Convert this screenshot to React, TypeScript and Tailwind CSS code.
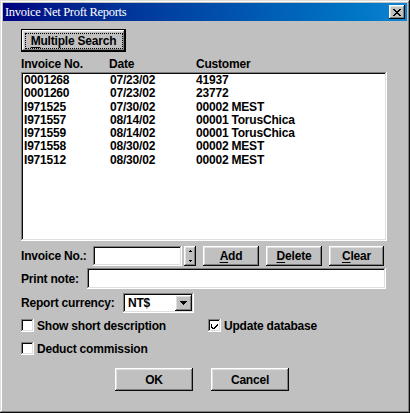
import React from 'react';

const raised =
    'bg-[#c0c0c0] shadow-[inset_-1px_-1px_#0a0a0a,inset_1px_1px_#ffffff,inset_-2px_-2px_#808080,inset_2px_2px_#dfdfdf]';
const sunken =
    'bg-white shadow-[inset_-1px_-1px_#ffffff,inset_1px_1px_#808080,inset_-2px_-2px_#dfdfdf,inset_2px_2px_#0a0a0a]';

const rows = [
    ['0001268', '07/23/02', '41937'],
    ['0001260', '07/23/02', '23772'],
    ['I971525', '07/30/02', '00002 MEST'],
    ['I971557', '08/14/02', '00001 TorusChica'],
    ['I971559', '08/14/02', '00001 TorusChica'],
    ['I971558', '08/30/02', '00002 MEST'],
    ['I971512', '08/30/02', '00002 MEST'],
];

function Btn({ w, children }: { w: string; children: React.ReactNode }) {
    return (
        <button className={`${raised} ${w} h-full flex items-center justify-center text-black`}>
            {children}
        </button>
    );
}

function Check({ checked, label }: { checked?: boolean; label: string }) {
    return (
        <label className="flex items-center gap-[3px] h-[13px]">
            <span className={`${sunken} w-[13px] h-[13px] flex items-center justify-center shrink-0`}>
                {checked && (
                    <svg width="7" height="7" viewBox="0 0 7 7">
                        <path d="M0 2h1v3h1v1h1v-1h1v-1h1v-1h1v-1h1v2h-1v1h-1v1h-1v1h-1v1h-1v-1h-1v-1h-1z" fill="#000" />
                    </svg>
                )}
            </span>
            <span>{label}</span>
        </label>
    );
}

export default function App() {
    return (
        <div
            className="w-[410px] h-[413px] bg-[#c0c0c0] p-[3px] flex flex-col text-black text-[12px] font-bold leading-none tracking-[-0.2px] shadow-[inset_-1px_-1px_#0a0a0a,inset_1px_1px_#dfdfdf,inset_-2px_-2px_#808080,inset_2px_2px_#ffffff]"
            style={{ fontFamily: '"Liberation Sans", Arial, sans-serif' }}
        >
            {/* title bar */}
            <div className="h-[18px] flex items-center justify-between pl-[2px] pr-[2px] bg-gradient-to-r from-[#000080] to-[#1084d0]">
                <span
                    className="text-white text-[12.5px] font-normal tracking-[-0.3px]"
                    style={{ fontFamily: '"Liberation Serif", "Times New Roman", serif' }}
                >
                    Invoice Net Proft Reports
                </span>
                <button className={`${raised} w-[16px] h-[14px] flex items-center justify-center`}>
                    <svg width="8" height="7" viewBox="0 0 8 7">
                        <path d="M0 0h2v1h1v1h2v-1h1v-1h2v1h-1v1h-1v1h-1v1h1v1h1v1h1v1h-2v-1h-1v-1h-2v1h-1v1h-2v-1h1v-1h1v-1h1v-1h-1v-1h-1v-1h-1z" fill="#000" />
                    </svg>
                </button>
            </div>

            <div className="flex flex-col pl-[18px] pr-[20px] pt-[8px]">
                <button className="relative w-[105px] h-[23px] border border-black bg-[#c0c0c0] shadow-[inset_-1px_-1px_#0a0a0a,inset_1px_1px_#ffffff,inset_-2px_-2px_#808080,inset_2px_2px_#dfdfdf] flex items-center justify-center">
                    <span className="absolute left-[3px] top-[3px] right-[2px] bottom-[2px] border border-dotted border-black" />
                    <span>
                        <span className="underline underline-offset-2">M</span>ultiple Search
                    </span>
                </button>

                <div className="flex h-[15px] leading-[15px] mt-[5px]">
                    <span className="w-[88px]">Invoice No.</span>
                    <span className="w-[87px]">Date</span>
                    <span>Customer</span>
                </div>

                <div className={`${sunken} h-[169px] pt-[2px] pl-[3px] flex flex-col`}>
                    {rows.map((r) => (
                        <div key={r[0] + r[2]} className="flex h-[13.25px] leading-[13.25px]">
                            <span className="w-[86px]">{r[0]}</span>
                            <span className="w-[86px]">{r[1]}</span>
                            <span>{r[2]}</span>
                        </div>
                    ))}
                </div>

                <div className="flex items-center h-[20px] mt-[5px]">
                    <span className="w-[72px]">Invoice No.:</span>
                    <span className={`${sunken} w-[89px] h-full`} />
                    <span className={`${raised} w-[12px] h-full ml-[2px] flex flex-col items-center justify-between py-[4px]`}>
                        <svg width="3" height="2" viewBox="0 0 3 2">
                            <path d="M1 0h1v1h1v1h-3v-1h1z" fill="#000" />
                        </svg>
                        <svg width="3" height="2" viewBox="0 0 3 2">
                            <path d="M0 0h3v1h-1v1h-1v-1h-1z" fill="#000" />
                        </svg>
                    </span>
                    <div className="flex h-full gap-[7px] ml-[7px]">
                        <Btn w="w-[56px]">
                            <span><span className="underline underline-offset-2">A</span>dd</span>
                        </Btn>
                        <Btn w="w-[56px]">
                            <span><span className="underline underline-offset-2">D</span>elete</span>
                        </Btn>
                        <Btn w="w-[55px]">
                            <span><span className="underline underline-offset-2">C</span>lear</span>
                        </Btn>
                    </div>
                </div>

                <div className="flex items-center h-[21px] mt-[2px]">
                    <span className="w-[66px]">Print note:</span>
                    <span className={`${sunken} w-[299px] h-full`} />
                </div>

                <div className="flex items-center h-[20px] mt-[4px]">
                    <span className="w-[102px]">Report currency:</span>
                    <div className={`${sunken} w-[71px] h-full flex items-center justify-between pl-[5px] pr-[2px]`}>
                        <span>NT$</span>
                        <span className={`${raised} w-[17px] h-[16px] flex items-center justify-center`}>
                            <svg width="7" height="4" viewBox="0 0 7 4">
                                <path d="M0 0h7v1h-1v1h-1v1h-1v1h-1v-1h-1v-1h-1v-1h-1z" fill="#000" />
                            </svg>
                        </span>
                    </div>
                </div>

                <div className="flex mt-[6px]">
                    <div className="w-[187px]">
                        <Check label="Show short description" />
                    </div>
                    <Check checked label="Update database" />
                </div>
                <div className="flex mt-[10px]">
                    <Check label="Deduct commission" />
                </div>

                <div className="flex h-[23px] mt-[13px] pl-[94px] gap-[18px]">
                    <Btn w="w-[78px]">OK</Btn>
                    <Btn w="w-[78px]">Cancel</Btn>
                </div>
            </div>
        </div>
    );
}
